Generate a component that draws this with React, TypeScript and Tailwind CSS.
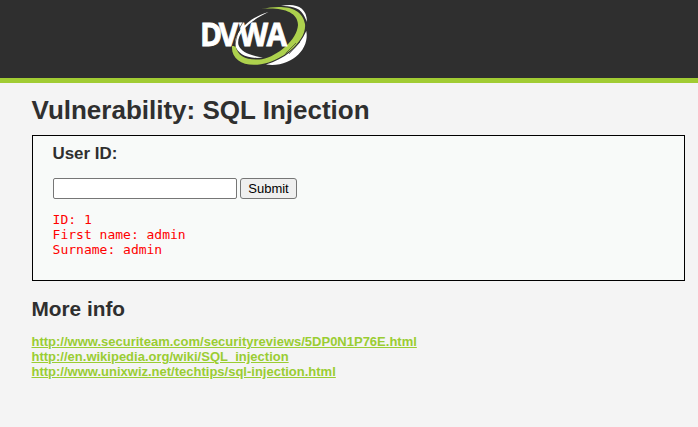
function Logo() {
  return (
    <svg width="110" height="70" viewBox="200 0 110 70" role="img" aria-label="DVWA">
      <path d="M281 6C294 3 307 6 307 22C306 20 305 17 303 14C299 7 290 6 281 6Z" fill="#fff" />
      <path d="M306.3 31C310 50 290 68 266 64.5C284 59 299 48 306.3 31Z" fill="#fff" />
      <path d="M261.5 9C281 5 302 6 305 24C307 41 282 61 261 64.2C244 67 231 60 232 46L235.5 46C238 57 247 60.5 262 59.2C278 56 297 40 298 25C298 11 280 7 261.5 9Z" fill="#add14d" />
      <path d="M285.5 53.5L296 43M289 54L300 42" stroke="#2f2f2f" strokeWidth="0.6" />
      <path d="M268.5 12C247 18 233 35 235.3 45C237 54 248 59.5 263 57.5C250 55.5 241 52 238.5 45C236 34 249 21 268.5 12Z" fill="#fff" />
      <text
        x="217.4 237.8 260 289.6"
        y="46"
        transform="scale(0.92 1)"
        fontSize="32.5"
        fontWeight="700"
        fill="#fff"
        stroke="#fff"
        strokeWidth="0.8"
        className="font-['Open_Sans',sans-serif]"
      >
        DVWA
      </text>
      <path d="M243 22Q236 33 234.8 47" fill="none" stroke="#2f2f2f" strokeWidth="0.7" />
    </svg>
  );
}

const links = [
  "http://www.securiteam.com/securityreviews/5DP0N1P76E.html",
  "http://en.wikipedia.org/wiki/SQL_injection",
  "http://www.unixwiz.net/techtips/sql-injection.html",
];

export default function App() {
  return (
    <div className="min-h-screen bg-[#f4f4f4] font-['Liberation_Sans',Arial,sans-serif] text-[13px] leading-[15px] text-[#2f2f2f]">
      <header className="h-[83px] border-b-[5px] border-[#a1cc33] bg-[#2f2f2f] pl-[200px]">
        <Logo />
      </header>
      <main className="pr-[13px] pl-[32px]">
        <h1 className="-ml-[0.5px] pt-3 text-[26px] leading-[30px] font-bold">Vulnerability: SQL Injection</h1>
        <section className="mt-[10px] h-[146px] border border-black bg-[#f8faf9] pl-5">
          <h3 className="-ml-[0.5px] pt-2 text-[16.9px] leading-[19px] font-bold">User ID:</h3>
          <form className="mt-[15px] flex gap-[3px]" onSubmit={(e) => e.preventDefault()}>
            <input type="text" className="h-[21px] w-[184px] rounded-[2px] border border-[#767676] bg-white px-1" />
            <button type="submit" className="h-[21px] w-[57px] rounded-[3px] border border-[#767676] bg-[#efefef] text-[13px] leading-[19px] text-black">
              Submit
            </button>
          </form>
          <pre className="-ml-[0.4px] mt-[13px] font-['DejaVu_Sans_Mono',monospace] text-[13px] leading-[15px] text-[#ff0000]">{"ID: 1\nFirst name: admin\nSurname: admin"}</pre>
        </section>
        <h2 className="-ml-[0.5px] mt-4 text-[20.8px] leading-6 font-bold">More info</h2>
        <ul className="-ml-[0.5px] mt-[13px]">
          {links.map((link) => (
            <li key={link}>
              <a href={link} className="font-bold text-[#9acd32] underline">{link}</a>
            </li>
          ))}
        </ul>
      </main>
    </div>
  );
}
